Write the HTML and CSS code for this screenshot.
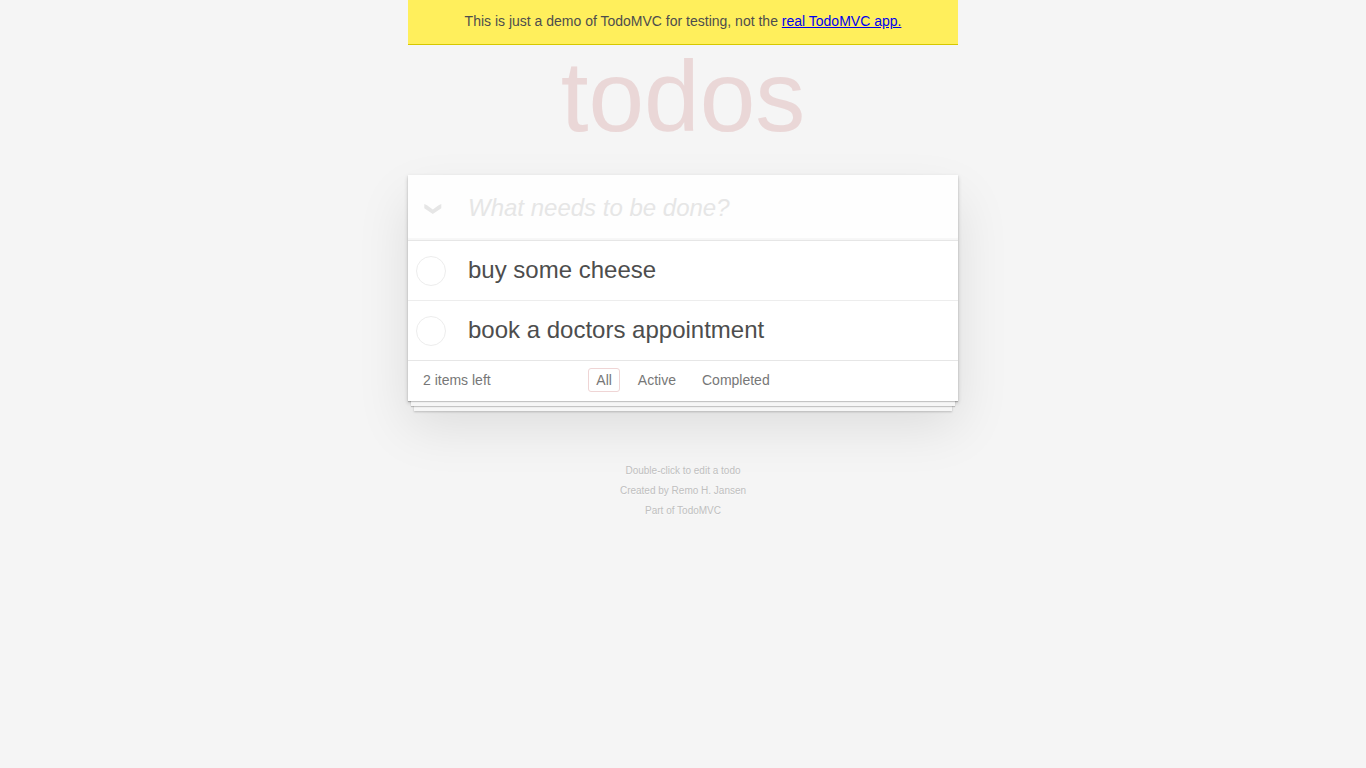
FILE: index.html
```html
<!DOCTYPE html>
<html lang="en">
<head>
<meta charset="utf-8">
<meta name="viewport" content="width=device-width, initial-scale=1">
<title>TodoMVC</title>
<link rel="stylesheet" href="styles.css">
</head>
<body>
<div class="page">
  <p class="notice">This is just a demo of TodoMVC for testing, not the <a href="#todomvc">real TodoMVC app.</a></p>
  <h1 class="title">todos</h1>
  <main class="todoapp">
    <header class="entry">
      <label class="toggle-all">
        <input type="checkbox" class="toggle-all-input" aria-label="Mark all as complete">
        <svg class="chevron" viewBox="0 0 18 10" aria-hidden="true"><path d="M0.3 0 L3 1.2 L8.8 5.4 L14.6 1.2 L17.3 0 V4.2 L8.8 10 L0.3 4.2 Z"/></svg>
      </label>
      <input type="text" class="new-todo" placeholder="What needs to be done?" aria-label="New todo">
    </header>
    <ul class="todo-list">
      <li class="todo">
        <input type="checkbox" class="toggle" id="todo-1">
        <label class="todo-text" for="todo-1">buy some cheese</label>
      </li>
      <li class="todo">
        <input type="checkbox" class="toggle" id="todo-2">
        <label class="todo-text" for="todo-2">book a doctors appointment</label>
      </li>
    </ul>
    <footer class="status">
      <span class="count">2 items left</span>
      <nav class="filters" aria-label="Filter todos">
        <a class="filter selected" href="#all">All</a>
        <a class="filter" href="#active">Active</a>
        <a class="filter" href="#completed">Completed</a>
      </nav>
    </footer>
  </main>
  <footer class="info">
    <p>Double-click to edit a todo</p>
    <p>Created by <a href="#author">Remo H. Jansen</a></p>
    <p>Part of <a href="#todomvc">TodoMVC</a></p>
  </footer>
</div>
</body>
</html>
```
FILE: styles.css
```css
* {
  box-sizing: border-box;
}

body {
  margin: 0;
  background: #f5f5f5;
  color: #4d4d4d;
  font: 14px/20px "Liberation Sans", Arial, sans-serif;
}

.page {
  max-width: 550px;
  margin: 0 auto;
}

.notice {
  margin: 0;
  padding: 11px 16px 13px;
  background: #ffef5c;
  border-bottom: 1px solid #d6c800;
  text-align: center;
}

.notice a {
  color: #0000ee;
}

.title {
  margin: 0 0 28px;
  color: #ead7d7;
  font-size: 100px;
  font-weight: 400;
  line-height: 102px;
  text-align: center;
}

.todoapp {
  background: #fff;
  box-shadow:
    0 1px 1px rgba(0, 0, 0, 0.2),
    0 8px 0 -3px #f6f6f6,
    0 9px 1px -3px rgba(0, 0, 0, 0.2),
    0 16px 0 -6px #f6f6f6,
    0 17px 2px -6px rgba(0, 0, 0, 0.2),
    0 2px 4px 0 rgba(0, 0, 0, 0.2),
    0 25px 50px 0 rgba(0, 0, 0, 0.1);
}

.entry {
  display: flex;
  background: #fefefe;
  box-shadow: inset 0 -2px 1px rgba(0, 0, 0, 0.03);
}

.toggle-all {
  display: flex;
  align-items: center;
  padding: 2px 26px 0 16px;
}

.toggle-all-input {
  appearance: none;
  width: 0;
  height: 0;
  margin: 0;
}

.chevron {
  width: 18px;
  height: 10px;
  fill: #e6e6e6;
}

.new-todo {
  flex: 1;
  min-width: 0;
  margin: 0;
  padding: 16px 16px 16px 0;
  border: 0;
  outline: 0;
  background: transparent;
  color: inherit;
  font: 24px/33px "Liberation Sans", Arial, sans-serif;
}

.new-todo::placeholder {
  color: #e6e6e6;
  font-style: italic;
  opacity: 1;
}

.todo-list {
  margin: 0;
  padding: 0;
  border-top: 1px solid #e6e6e6;
  list-style: none;
}

.todo {
  display: flex;
  align-items: center;
  gap: 22px;
  padding: 0 16px 0 8px;
  font-size: 24px;
  line-height: 29px;
}

.todo + .todo {
  border-top: 1px solid #ededed;
}

.toggle {
  appearance: none;
  flex: none;
  width: 30px;
  height: 30px;
  margin: 0;
  border: 1px solid #ededed;
  border-radius: 50%;
  background: #fff;
}

.todo-text {
  flex: 1;
  padding: 14px 0 16px;
}

.status {
  display: grid;
  grid-template-columns: 1fr auto 1fr;
  align-items: center;
  padding: 7px 15px 9px;
  border-top: 1px solid #e6e6e6;
  color: #777;
}

.filters {
  display: flex;
  gap: 10px;
}

.filter {
  padding: 1px 7px;
  border: 1px solid transparent;
  border-radius: 3px;
  color: inherit;
  text-decoration: none;
}

.filter.selected {
  border-color: #efd5d5;
}

.info {
  margin-top: 60px;
  color: #bfbfbf;
  font-size: 10px;
  text-align: center;
  text-shadow: 0 1px 0 rgba(255, 255, 255, 0.5);
}

.info p {
  margin: 0;
}

.info a {
  color: inherit;
  text-decoration: none;
}
```
